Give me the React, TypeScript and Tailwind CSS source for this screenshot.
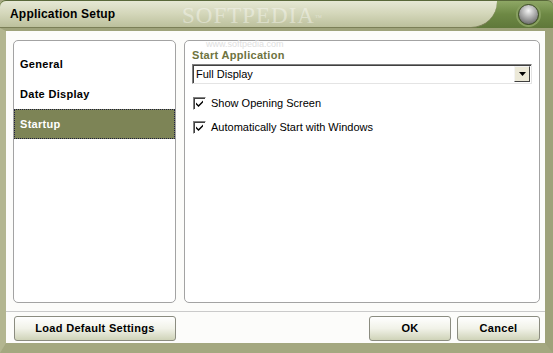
import { useState } from "react";

const FONT = { fontFamily: "Tahoma, 'Liberation Sans', Arial, sans-serif" };

const MENU = ["General", "Date Display", "Startup"];

function Check({ checked }: { checked: boolean }) {
  return (
    <span className="flex h-[13px] w-[13px] shrink-0 items-center justify-center border border-t-[#808080] border-l-[#808080] border-b-white border-r-white bg-white shadow-[inset_1px_1px_0_#404040]">
      {checked && (
        <svg width="9" height="9" viewBox="0 0 9 9">
          <path d="M1 3.5 L3.5 6 L8 1.5 L8 3.5 L3.5 8 L1 5.5 Z" fill="#000" />
        </svg>
      )}
    </span>
  );
}

function Btn({ label, className }: { label: string; className?: string }) {
  return (
    <button
      type="button"
      className={`flex h-[25px] items-center justify-center rounded-[3px] border border-[#8b8c80] bg-gradient-to-b from-white via-[#f1f2e8] to-[#cfd3b8] text-[11px] font-bold tracking-[0.3px] text-black ${className ?? ""}`}
    >
      {label}
    </button>
  );
}

export default function App() {
  const [active, setActive] = useState(2);
  const [opening, setOpening] = useState(true);
  const [autoStart, setAutoStart] = useState(true);

  return (
    <div className="relative flex h-[353px] w-[553px] flex-col overflow-hidden bg-[#a6a982]" style={FONT}>
      {/* Title bar */}
      <div className="flex h-[28px] shrink-0 rounded-t-[6px] border-t border-[#59683a] bg-gradient-to-b from-[#8ea765] via-[#6d8844] to-[#5f783a]">
        <div className="relative flex w-[497px] items-center rounded-tl-[6px] rounded-br-[26px] border-b border-[#7b7f57] bg-gradient-to-b from-[#e6e8d5] via-[#d3d6b9] to-[#bcc09c] pl-[10px]">
          <span className="text-[12px] font-bold tracking-[0.2px] text-black">Application Setup</span>
          <span
            className="absolute left-[182px] top-[3px] text-[23px] leading-none tracking-[1px] text-white/40"
            style={{ fontFamily: "'Liberation Serif', serif" }}
          >
            SOFTPEDIA<sup className="text-[7px]">™</sup>
          </span>
        </div>
        <div className="flex flex-1 items-center justify-center pl-[6px]">
          <span className="h-[21px] w-[21px] rounded-full border border-[#3e4d27] bg-[radial-gradient(circle_at_50%_30%,#f4f4f4,#9a9a9a_55%,#4d4d4d)] shadow-[0_0_0_2px_#88a060]" />
        </div>
      </div>

      {/* Frame */}
      <div className="flex flex-1 flex-col border-t-[3px] border-l-[6px] border-r-[8px] border-b-[10px] border-t-[#9fa37b] border-l-[#b3b690] border-r-[#9ea27a] border-b-[#a4a880] shadow-[inset_1px_1px_0_#5e6242]">
        <div className="relative flex flex-1 flex-col bg-[#fcfcfa] pt-[9px] pl-[7px] pr-[5px] pb-[2px]">
          <div className="flex h-[263px] gap-[8px]">
            {/* Left menu */}
            <div className="w-[163px] rounded-[5px] border border-[#a3a3a3] bg-white pt-[8px]">
              {MENU.map((m, i) => (
                <div
                  key={m}
                  onClick={() => setActive(i)}
                  className={
                    i === active
                      ? "flex h-[30px] cursor-pointer items-center border border-dotted border-[#1e1e40] bg-[#7d8456] pl-[5px] text-[11px] font-bold tracking-[0.3px] text-white"
                      : "flex h-[30px] cursor-pointer items-center pl-[6px] text-[11px] font-bold tracking-[0.3px] text-black"
                  }
                >
                  {m}
                </div>
              ))}
            </div>

            {/* Right content */}
            <div className="relative w-[356px] rounded-[5px] border border-[#a3a3a3] bg-white px-[7px] pt-[7px]">
              <span className="absolute left-[21px] -top-[1px] text-[9px] leading-[9px] text-[#e0e0e0]">www.softpedia.com</span>
              <div className="relative text-[11px] font-bold leading-[14px] tracking-[0.3px] text-[#6e7340]">Start Application</div>
              <div className="mt-[2px] flex h-[20px] items-center border border-t-[#808080] border-l-[#808080] border-b-[#e4e4e4] border-r-[#e4e4e4] bg-white shadow-[inset_1px_1px_0_#404040]">
                <span className="flex-1 pl-[3px] text-[11px] text-black">Full Display</span>
                <span className="mr-[1px] flex h-[16px] w-[16px] items-center justify-center border border-t-[#f4f4f4] border-l-[#f4f4f4] border-b-[#404040] border-r-[#404040] bg-[#ece9d8]">
                  <svg width="7" height="4" viewBox="0 0 7 4">
                    <path d="M0 0 H7 L3.5 4 Z" fill="#000" />
                  </svg>
                </span>
              </div>
              <label
                className="mt-[12px] flex cursor-pointer items-center gap-[5px] pl-[1px] text-[11px] leading-[14px] text-black"
                onClick={() => setOpening(!opening)}
              >
                <Check checked={opening} />
                Show Opening Screen
              </label>
              <label
                className="mt-[10px] flex cursor-pointer items-center gap-[5px] pl-[1px] text-[11px] leading-[14px] text-black"
                onClick={() => setAutoStart(!autoStart)}
              >
                <Check checked={autoStart} />
                Automatically Start with Windows
              </label>
            </div>
          </div>

          <div className="-ml-[7px] -mr-[5px] mt-[8px] h-px bg-[#cacaca]" />

          <div className="mt-[4px] flex items-center">
            <Btn label="Load Default Settings" className="ml-[1px] w-[162px]" />
            <div className="flex-1" />
            <Btn label="OK" className="w-[82px]" />
            <Btn label="Cancel" className="ml-[6px] w-[83px]" />
          </div>
        </div>
      </div>
    </div>
  );
}
